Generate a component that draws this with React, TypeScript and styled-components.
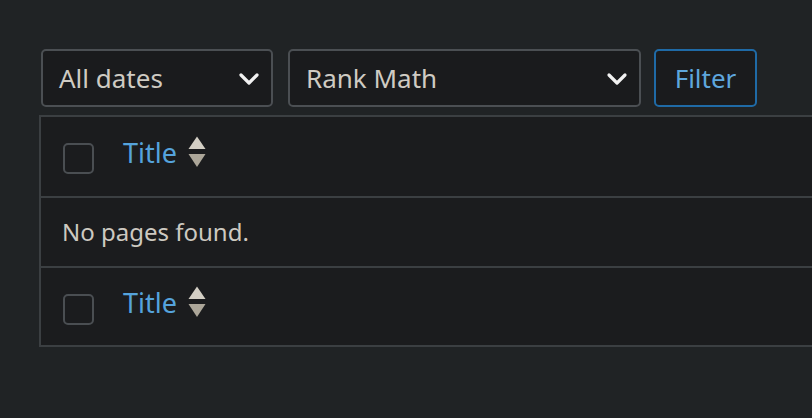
import React from "react";
import styled, { createGlobalStyle } from "styled-components";

const GlobalStyle = createGlobalStyle`
  html, body {
    margin: 0;
    padding: 0;
    background: #202325;
    overflow: hidden;
  }
  body {
    font-family: "Noto Sans", "Open Sans", sans-serif;
    color: #cdc9c1;
  }
`;

const Page = styled.div`
  padding: 49px 0 0 39px;
  width: 860px;
`;

const FilterBar = styled.div`
  display: flex;
  align-items: center;
  margin-left: 2px;
  height: 58px;
`;

const Select = styled.div<{ $width: number; $gap: number }>`
  box-sizing: border-box;
  width: ${(p) => p.$width}px;
  height: 58px;
  margin-right: ${(p) => p.$gap}px;
  display: flex;
  align-items: center;
  justify-content: space-between;
  padding: 0 11px 0 16px;
  background: #1a1b1d;
  border: 2px solid #4b4f53;
  border-radius: 5px;
  font-size: 26px;
  color: #cfcbc3;
`;

const Chevron = styled.svg`
  width: 22px;
  height: 22px;
  margin-top: 2px;
`;

const FilterButton = styled.button`
  box-sizing: border-box;
  width: 103px;
  height: 58px;
  background: #1a1b1d;
  border: 2px solid #1f6aa6;
  border-radius: 5px;
  color: #5ea6dc;
  font-family: inherit;
  font-size: 26px;
  padding: 0;
`;

const Table = styled.div`
  margin-top: 8px;
  border: 2px solid #3b3f42;
  border-right: none;
  background: #1b1c1e;
`;

const HeadRow = styled.div<{ $foot?: boolean }>`
  box-sizing: border-box;
  height: 79px;
  display: flex;
  align-items: center;
  padding-left: 22px;
  ${(p) => (p.$foot ? "border-top: 2px solid #3b3f42;" : "")}
`;

const EmptyRow = styled.div`
  box-sizing: border-box;
  height: 70px;
  display: flex;
  align-items: center;
  padding: 0 0 2px 21px;
  border-top: 2px solid #3b3f42;
  font-size: 24px;
  color: #cdc9c1;
`;

const Checkbox = styled.span<{ $shift: number }>`
  box-sizing: border-box;
  width: 31px;
  height: 31px;
  border: 2px solid #4a4e52;
  border-radius: 5px;
  background: #1b1c1e;
  margin-top: ${(p) => p.$shift}px;
`;

const SortLink = styled.a<{ $lift: number }>`
  display: flex;
  align-items: center;
  margin-left: 29px;
  margin-bottom: ${(p) => p.$lift}px;
  color: #55a3dc;
  font-size: 27px;
  text-decoration: none;
`;

const SortIcon = styled.svg`
  width: 18px;
  height: 32px;
  margin-left: 11px;
  margin-top: -2px;
`;

function Sorter() {
  return (
    <SortIcon viewBox="0 0 18 32">
      <path d="M9 0.5 L17.5 13 L0.5 13 Z" fill="#d3cec4" />
      <path d="M0.5 18 L17.5 18 L9 31 Z" fill="#aca699" />
    </SortIcon>
  );
}

function DownChevron() {
  return (
    <Chevron viewBox="0 0 22 22">
      <path
        d="M3 7 L11 15 L19 7"
        fill="none"
        stroke="#f2f2f2"
        strokeWidth="3.2"
        strokeLinecap="round"
        strokeLinejoin="round"
      />
    </Chevron>
  );
}

function HeaderCells({ shift, lift }: { shift: number; lift: number }) {
  return (
    <>
      <Checkbox $shift={shift} />
      <SortLink $lift={lift}>
        Title
        <Sorter />
      </SortLink>
    </>
  );
}

function App() {
  return (
    <>
      <GlobalStyle />
      <Page>
        <FilterBar>
          <Select $width={232} $gap={15}>
            <span>All dates</span>
            <DownChevron />
          </Select>
          <Select $width={353} $gap={13}>
            <span>Rank Math</span>
            <DownChevron />
          </Select>
          <FilterButton>Filter</FilterButton>
        </FilterBar>
        <Table>
          <HeadRow>
            <HeaderCells shift={3} lift={8} />
          </HeadRow>
          <EmptyRow>No pages found.</EmptyRow>
          <HeadRow $foot>
            <HeaderCells shift={6} lift={8} />
          </HeadRow>
        </Table>
      </Page>
    </>
  );
}

export default App;
